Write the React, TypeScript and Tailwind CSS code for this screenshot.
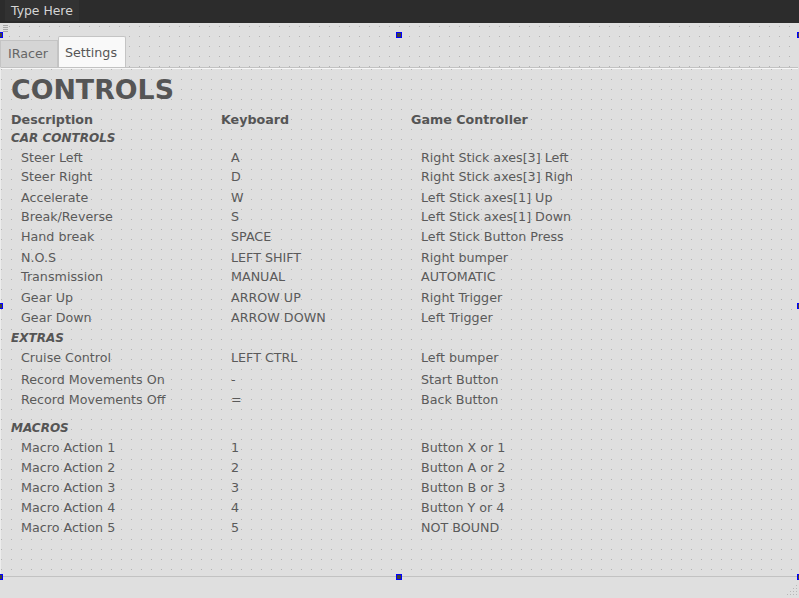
import React from "react";

type Row = {
  kind: "section" | "item";
  label: string;
  key?: string;
  pad?: string;
  gap: string;
};

const rows: Row[] = [
  { kind: "section", label: "CAR CONTROLS", gap: "mt-0" },
  { kind: "item", label: "Steer Left", key: "A", pad: "Right Stick axes[3] Left", gap: "mt-[2px]" },
  { kind: "item", label: "Steer Right", key: "D", pad: "Right Stick axes[3] Right", gap: "mt-[1px]" },
  { kind: "item", label: "Accelerate", key: "W", pad: "Left Stick axes[1] Up", gap: "mt-[3px]" },
  { kind: "item", label: "Break/Reverse", key: "S", pad: "Left Stick axes[1] Down", gap: "mt-[1px]" },
  { kind: "item", label: "Hand break", key: "SPACE", pad: "Left Stick Button Press", gap: "mt-[2px]" },
  { kind: "item", label: "N.O.S", key: "LEFT SHIFT", pad: "Right bumper", gap: "mt-[3px]" },
  { kind: "item", label: "Transmission", key: "MANUAL", pad: "AUTOMATIC", gap: "mt-[1px]" },
  { kind: "item", label: "Gear Up", key: "ARROW UP", pad: "Right Trigger", gap: "mt-[3px]" },
  { kind: "item", label: "Gear Down", key: "ARROW DOWN", pad: "Left Trigger", gap: "mt-[2px]" },
  { kind: "section", label: "EXTRAS", gap: "mt-[2px]" },
  { kind: "item", label: "Cruise Control", key: "LEFT CTRL", pad: "Left bumper", gap: "mt-[2px]" },
  { kind: "item", label: "Record Movements On", key: "-", pad: "Start Button", gap: "mt-[4px]" },
  { kind: "item", label: "Record Movements Off", key: "=", pad: "Back Button", gap: "mt-[2px]" },
  { kind: "section", label: "MACROS", gap: "mt-[10px]" },
  { kind: "item", label: "Macro Action 1", key: "1", pad: "Button X or 1", gap: "mt-[2px]" },
  { kind: "item", label: "Macro Action 2", key: "2", pad: "Button A or 2", gap: "mt-[2px]" },
  { kind: "item", label: "Macro Action 3", key: "3", pad: "Button B or 3", gap: "mt-[2px]" },
  { kind: "item", label: "Macro Action 4", key: "4", pad: "Button Y or 4", gap: "mt-[2px]" },
  { kind: "item", label: "Macro Action 5", key: "5", pad: "NOT BOUND", gap: "mt-[2px]" },
];

// selection handles of the designer
const handles = [
  "left-[-3px] top-[32px]",
  "left-[396px] top-[32px]",
  "left-[797px] top-[32px]",
  "left-[-3px] top-[303px]",
  "left-[797px] top-[303px]",
  "left-[-3px] top-[574px]",
  "left-[396px] top-[574px]",
  "left-[797px] top-[574px]",
];

export default function App() {
  return (
    <div className="relative h-[598px] w-[799px] overflow-hidden bg-[#dfdfdf] font-['DejaVu_Sans',sans-serif] text-[12.7px] text-[#5a5a5a]">
      {/* Menu bar */}
      <div className="flex h-[23px] items-start bg-[#2c2c2c] pl-[5px]">
        <div className="h-[21px] bg-[#323232] px-[6px] text-[12.4px] leading-[22px] text-[#d6d6d6]">Type Here</div>
      </div>

      {/* Form */}
      <div className="relative h-[554px] bg-[conic-gradient(at_1px_1px,transparent_75%,#b4b4b4_0)] bg-size-[10px_10px] bg-position-[9px_3px]">
        <svg className="absolute left-[3px] top-[2px]" width="5" height="8" viewBox="0 0 5 8">
          <path d="M0 0.5H5M0 2.5H5M0 4.5H5M0 6.5H5" stroke="#a8a8a8" strokeWidth="1" />
        </svg>

        {/* Tabs */}
        <div className="flex h-[44px] items-end">
          <div className="h-[27px] w-[58px] border border-b-0 border-[#c4c4c4] bg-[#d5d5d5] pl-[7px] leading-[26px] text-[#666]">
            IRacer
          </div>
          <div className="h-[31px] w-[68px] rounded-t-[2px] border border-b-0 border-[#c4c4c4] bg-[#f9f9f9] pl-[6px] leading-[31px] text-[#555]">
            Settings
          </div>
        </div>

        {/* Tab pane */}
        <div className="h-[510px] w-[798px] border-t border-b border-l border-[#c2c2c2] border-l-[#ececec] bg-[#dfdfdf] bg-[conic-gradient(at_1px_1px,transparent_75%,#b4b4b4_0)] bg-size-[10px_10px] bg-position-[0px_1px] pl-[10px] pt-[5px] shadow-[inset_0_1px_0_#f7f7f7]">
          <div className="text-[26.8px] font-bold leading-[34px] text-[#555]">CONTROLS</div>

          <div className="mt-[4px] flex font-bold leading-[18px] text-[#555]">
            <div className="w-[210px]">Description</div>
            <div className="w-[190px]">Keyboard</div>
            <div>Game Controller</div>
          </div>

          {rows.map((r) =>
            r.kind === "section" ? (
              <div key={r.label} className={`${r.gap} text-[12px] font-bold italic leading-[18px] text-[#555]`}>
                {r.label}
              </div>
            ) : (
              <div key={r.label} className={`${r.gap} flex leading-[18px]`}>
                <div className="w-[210px] pl-[10px]">{r.label}</div>
                <div className="w-[190px] pl-[10px]">{r.key}</div>
                <div className="w-[161px] overflow-hidden whitespace-nowrap pl-[10px]">{r.pad}</div>
              </div>
            )
          )}
        </div>
      </div>

      {/* Resize grip */}
      <svg className="absolute left-[786px] top-[584px]" width="12" height="12" viewBox="0 0 12 12">
        {[
          [10, 1],
          [10, 4], [7, 4],
          [10, 7], [7, 7], [4, 7],
          [10, 10], [7, 10], [4, 10], [1, 10],
        ].map(([x, y], i) => (
          <rect key={i} x={x} y={y} width="1" height="1" fill="#b8b8b8" />
        ))}
      </svg>

      {handles.map((h) => (
        <div key={h} className={`absolute ${h} h-[6px] w-[6px] border border-[#0000ff] bg-[#404040]`} />
      ))}
    </div>
  );
}
